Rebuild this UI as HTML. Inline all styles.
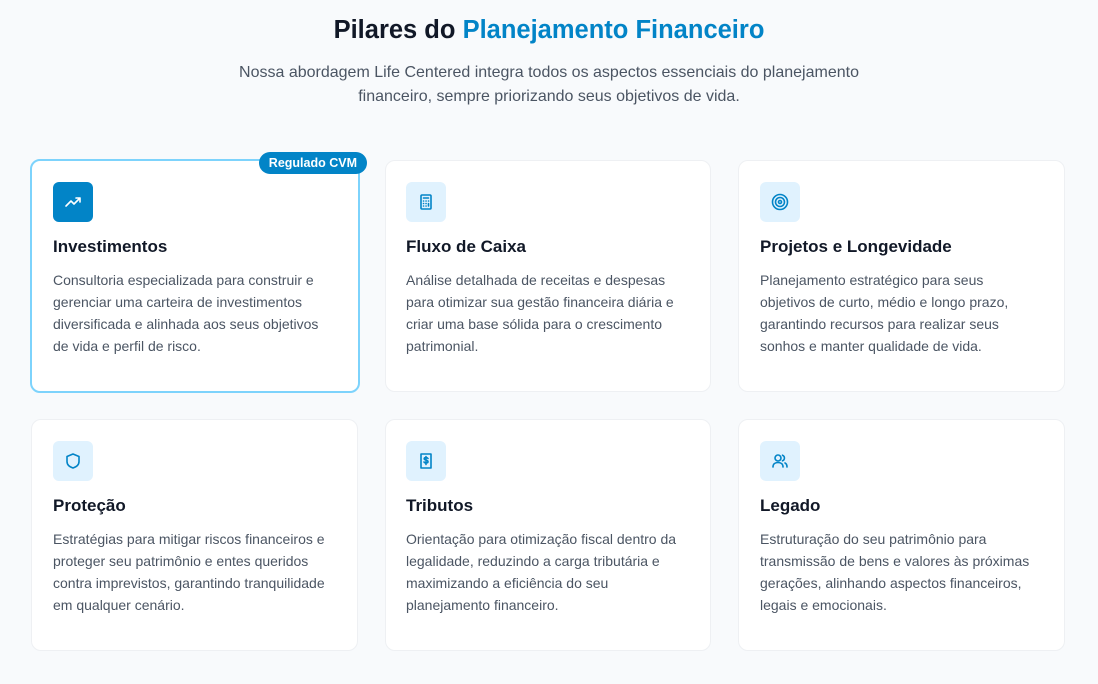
<!DOCTYPE html>
<html><head><meta charset="utf-8"><style>
*{box-sizing:border-box;margin:0;padding:0}
body{width:1098px;height:684px;background:#f8fafc;font-family:"Liberation Sans",sans-serif;position:relative;overflow:hidden}
h1{position:absolute;top:16px;left:0;width:1098px;text-align:center;font-size:25.5px;font-weight:700;color:#111827}
h1 span{color:#0284c7}
.sub{position:absolute;top:61px;left:0;width:1098px;text-align:center;font-size:16px;line-height:24px;color:#4b5563}
.card{position:absolute;background:#fff;border:1px solid #eef0f3;border-radius:10px;padding:21px 20px}
.card.hl{border:2px solid #7dd3fc;padding:21px 21px 20px}
.ic{width:40px;height:40px;border-radius:6px;background:#e0f2fe;display:flex;align-items:center;justify-content:center}
.hl .ic{background:#0284c7}
.card h3{margin-top:15px;font-size:17px;font-weight:700;color:#111827;line-height:20px}
.card p{margin-top:12px;font-size:14px;line-height:22px;color:#4b5563;white-space:nowrap}
.badge{position:absolute;top:-9px;right:-9px;background:#0284c7;color:#fff;font-size:12.5px;font-weight:700;padding:3px 10px;border-radius:12px;line-height:16px}
svg{width:20px;height:20px;fill:none;stroke:#0284c7;stroke-width:1.6;stroke-linecap:round;stroke-linejoin:round}
</style></head><body>
<h1>Pilares do <span>Planejamento Financeiro</span></h1>
<div class="sub">Nossa abordagem Life Centered integra todos os aspectos essenciais do planejamento<br>financeiro, sempre priorizando seus objetivos de vida.</div>

<div class="card hl" style="left:30px;top:159px;width:330px;height:234px"><div class="badge">Regulado CVM</div>
<div class="ic"><svg style="stroke:#fff"><path d="M3 14l5-5 3 3 6-6M13 6h4v4"/></svg></div>
<h3>Investimentos</h3><p>Consultoria especializada para construir e<br>gerenciar uma carteira de investimentos<br>diversificada e alinhada aos seus objetivos<br>de vida e perfil de risco.</p></div>

<div class="card" style="left:385px;top:160px;width:326px;height:232px">
<div class="ic"><svg><rect x="5" y="3" width="10" height="14" rx="1"/><path d="M7.5 6h5M7.5 9h.1M10 9h.1M12.5 9h.1M7.5 11.5h.1M10 11.5h.1M7.5 14h.1M10 14h.1M12.5 11.5v2.5"/></svg></div>
<h3>Fluxo de Caixa</h3><p>Análise detalhada de receitas e despesas<br>para otimizar sua gestão financeira diária e<br>criar uma base sólida para o crescimento<br>patrimonial.</p></div>

<div class="card" style="left:738px;top:160px;width:327px;height:232px;padding-left:21px">
<div class="ic"><svg><circle cx="10" cy="10" r="7.5"/><circle cx="10" cy="10" r="4.5"/><circle cx="10" cy="10" r="1.5"/></svg></div>
<h3>Projetos e Longevidade</h3><p>Planejamento estratégico para seus<br>objetivos de curto, médio e longo prazo,<br>garantindo recursos para realizar seus<br>sonhos e manter qualidade de vida.</p></div>

<div class="card" style="left:31px;top:419px;width:327px;height:232px;padding-left:21px">
<div class="ic"><svg><path d="M10 3l6 2.5v5c0 3.5-3 5.5-6 6.5-3-1-6-3-6-6.5v-5z"/></svg></div>
<h3>Proteção</h3><p>Estratégias para mitigar riscos financeiros e<br>proteger seu patrimônio e entes queridos<br>contra imprevistos, garantindo tranquilidade<br>em qualquer cenário.</p></div>

<div class="card" style="left:385px;top:419px;width:326px;height:232px">
<div class="ic"><svg><rect x="5" y="3" width="10" height="14"/><path d="M12 7.5c-.5-.8-1.2-1-2-1-1 0-1.8.5-1.8 1.3 0 1.8 3.8.9 3.8 2.8 0 .9-.9 1.4-2 1.4-.8 0-1.6-.3-2-1M10 5.5v8"/></svg></div>
<h3>Tributos</h3><p>Orientação para otimização fiscal dentro da<br>legalidade, reduzindo a carga tributária e<br>maximizando a eficiência do seu<br>planejamento financeiro.</p></div>

<div class="card" style="left:738px;top:419px;width:327px;height:232px;padding-left:21px">
<div class="ic"><svg><circle cx="8" cy="7" r="3"/><path d="M3 16c0-3 2-4.5 5-4.5s5 1.5 5 4.5M12.5 4.2a3 3 0 010 5.6M15 12c1.3.6 2 1.8 2 4"/></svg></div>
<h3>Legado</h3><p>Estruturação do seu patrimônio para<br>transmissão de bens e valores às próximas<br>gerações, alinhando aspectos financeiros,<br>legais e emocionais.</p></div>
</body></html>
